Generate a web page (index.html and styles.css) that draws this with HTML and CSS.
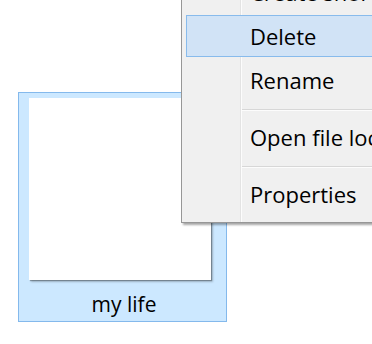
FILE: index.html
```html
<!DOCTYPE html>
<html>
<head>
    <title>Explorer Context Menu</title>
    <link rel="stylesheet" href="styles.css">
</head>
<body>
    <div class="desktop">
        <div class="file-item">
            <div class="thumb"></div>
            <div class="file-name">my life</div>
        </div>

        <div class="context-menu">
            <div class="menu-item">Create shortcut</div>
            <div class="menu-item active">Delete</div>
            <div class="menu-item">Rename</div>
            <div class="menu-sep"></div>
            <div class="menu-item">Open file location</div>
            <div class="menu-sep"></div>
            <div class="menu-item">Properties</div>
        </div>
    </div>
</body>
</html>
```

FILE: styles.css
```css
html, body {
    margin: 0;
    padding: 0;
    background: #fff;
    overflow: hidden;
}
body {
    font-family: "Open Sans", "Noto Sans", sans-serif;
    color: #111;
}
.desktop {
    position: relative;
    width: 372px;
    height: 344px;
    padding: 92px 0 0 18px;
    box-sizing: border-box;
}
.file-item {
    width: 209px;
    height: 230px;
    box-sizing: border-box;
    border: 1px solid #84b9ec;
    background: #cce8ff;
    padding: 5px 0 0 10px;
}
.thumb {
    width: 182px;
    height: 182px;
    background: #fff;
    box-shadow: 1px 1px 1px rgba(0,0,0,0.3), 2px 2px 2px rgba(0,0,0,0.2);
}
.file-name {
    margin-top: 6px;
    width: 190px;
    line-height: 36px;
    font-size: 21px;
    text-align: center;
    color: #000;
}
.context-menu {
    position: absolute;
    left: 181px;
    top: -33px;
    width: 230px;
    display: flex;
    flex-direction: column;
    padding: 2px 0 6px 0;
    border: 1px solid #979797;
    background: linear-gradient(to right, #f0f0f0 58px, #e3e3e3 58px, #e3e3e3 59px, #fcfcfc 59px, #fcfcfc 60px, #f0f0f0 60px);
    box-shadow: 2px 2px 2px rgba(0,0,0,0.35);
    font-size: 22px;
}
.menu-item {
    margin: 1px 0 1px 4px;
    height: 42px;
    box-sizing: border-box;
    border: 1px solid transparent;
    padding-left: 63px;
    line-height: 40px;
    white-space: nowrap;
    color: #000;
}
.menu-item.active {
    border-color: #88bbec;
    background: #d1e3f6;
}
.menu-sep {
    margin: 7px 0 4px 60px;
    height: 1px;
    background: #d7d7d7;
    border-bottom: 1px solid #fcfcfc;
}
```
